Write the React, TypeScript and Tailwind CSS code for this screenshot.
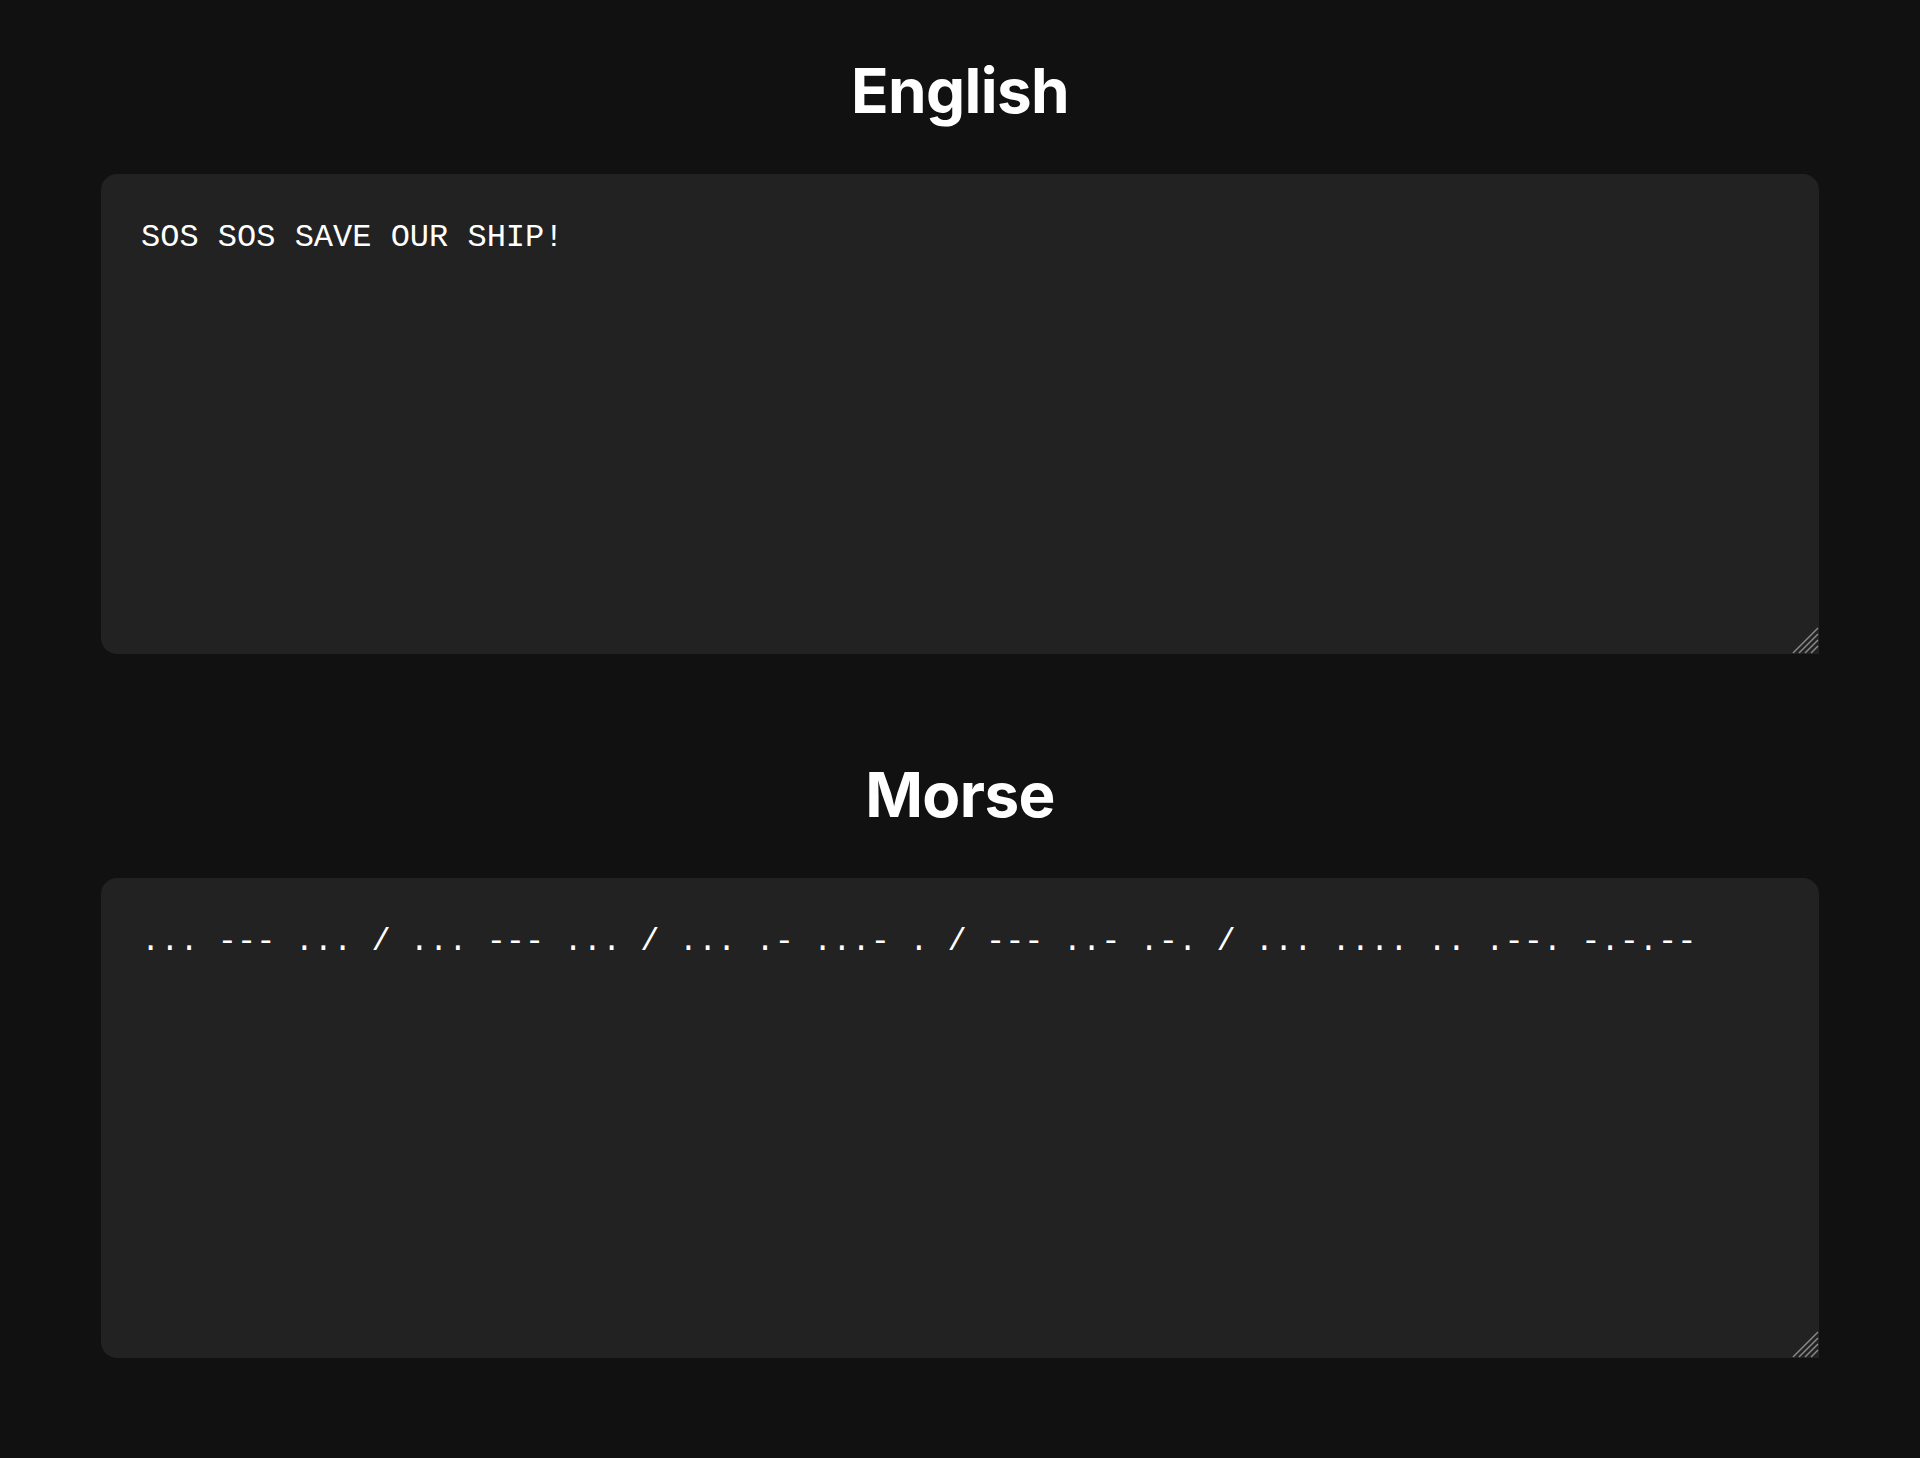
const english = "SOS SOS SAVE OUR SHIP!";
const morse =
  "... --- ... / ... --- ... / ... .- ...- . / --- ..- .-. / ... .... .. .--. -.-.--";

function ResizeGrip() {
  return (
    <svg
      width="28"
      height="28"
      viewBox="0 0 28 28"
      className="absolute right-0 bottom-0 pointer-events-none"
    >
      <g stroke="#8a8a8a" strokeWidth="1.5">
        <line x1="27" y1="2" x2="2" y2="27" />
        <line x1="27" y1="8" x2="8" y2="27" />
        <line x1="27" y1="14" x2="14" y2="27" />
        <line x1="27" y1="20" x2="20" y2="27" />
      </g>
    </svg>
  );
}

function Panel({ title, value }: { title: string; value: string }) {
  return (
    <section className="flex flex-col items-center">
      <h1 className="text-[62px] leading-none font-bold text-white font-['Inter',sans-serif] tracking-[-0.01em] mb-[52px]">
        {title}
      </h1>
      <div className="relative w-full">
        <textarea
          defaultValue={value}
          spellCheck={false}
          className="block w-full h-[480px] resize-none bg-[#222222] text-white rounded-2xl rounded-br-none px-10 pt-[45px] text-[32px] leading-[normal] font-['Liberation_Mono',monospace] outline-none border-0"
        />
        <ResizeGrip />
      </div>
    </section>
  );
}

export default function App() {
  return (
    <main className="min-h-screen bg-[#111111] px-[101px] pt-[60px] pb-[100px] flex flex-col gap-[110px]">
      <Panel title="English" value={english} />
      <Panel title="Morse" value={morse} />
    </main>
  );
}
